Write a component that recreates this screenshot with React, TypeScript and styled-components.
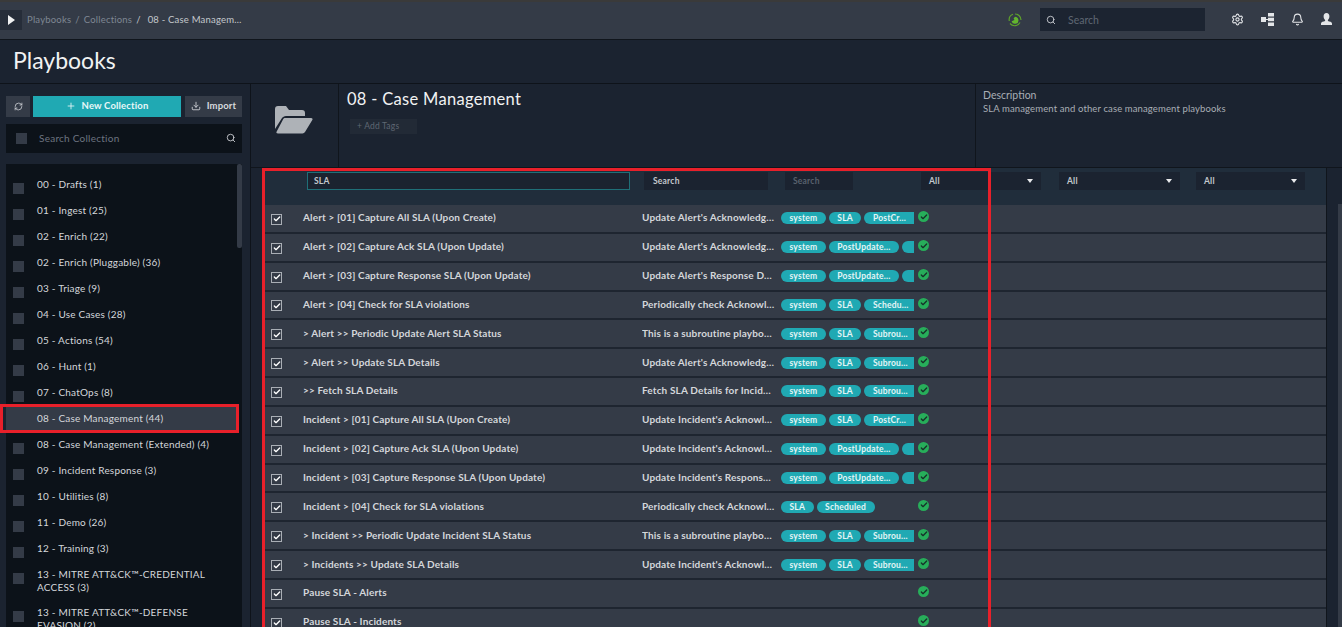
import React from "react";
import styled, { createGlobalStyle } from "styled-components";
import { Bell, Check, Download, Plus, RefreshCw, Search, Settings } from "lucide-react";

const GlobalStyle = createGlobalStyle`
  html, body { margin: 0; padding: 0; background: #1b2330; overflow: hidden; }
  * { box-sizing: border-box; }
  body { font-family: Lato, "Open Sans", sans-serif; }
`;

const Page = styled.div`
  width: 1342px;
  height: 627px;
  overflow: hidden;
  display: flex;
  flex-direction: column;
  color: #d7dade;
`;

const TopBar = styled.header`
  height: 40px;
  flex: none;
  display: flex;
  align-items: center;
  padding-bottom: 2px;
  background: #343b47;
  border-top: 2px solid #3a3a3a;
  border-bottom: 1px solid #10151c;
`;

const NavToggle = styled.div`
  width: 22px;
  height: 20px;
  background: #262d39;
  display: flex;
  align-items: center;
  justify-content: center;
  margin-right: 5px;
`;

const Crumbs = styled.div`
  flex: 1;
  display: flex;
  gap: 4px;
  font-size: 9.5px;
  letter-spacing: 0.2px;
  color: #7f8793;
`;

const CrumbSlash = styled.span`
  color: #c4c8cd;
  margin-right: 3px;
`;

const CrumbCurrent = styled.span`
  color: #c4c8cd;
`;

const TopSearch = styled.div`
  width: 165px;
  height: 23px;
  margin: 0 26px 0 18px;
  padding-left: 6px;
  display: flex;
  align-items: center;
  gap: 12px;
  background: #1c2431;
  font-size: 10.5px;
  color: #5f6773;
`;

const TopIcons = styled.div`
  display: flex;
  align-items: center;
  gap: 17px;
  padding-right: 10px;
`;

const TitleBand = styled.div`
  height: 44px;
  flex: none;
  padding: 0 0 3px 13px;
  display: flex;
  align-items: center;
  background: #1b2330;
  border-bottom: 1px solid #0e131a;
  font-size: 23px;
  line-height: 40px;
  color: #f1f2f3;
`;

const Body = styled.div`
  flex: 1;
  min-height: 0;
  display: flex;
`;

const Sidebar = styled.aside`
  width: 251px;
  flex: none;
  padding: 12px 8px 0 6px;
  background: #1b2330;
  border-right: 1px solid #0e131a;
  display: flex;
  flex-direction: column;
`;

const SideButtons = styled.div`
  display: flex;
  gap: 4px;
  margin-bottom: 7px;
`;

const IconButton = styled.button`
  width: 24px;
  height: 21px;
  padding: 0;
  border: none;
  background: #343b47;
  color: #d7dade;
  display: flex;
  align-items: center;
  justify-content: center;
  margin-right: -1px;
`;

const NewButton = styled.button`
  width: 148px;
  height: 21px;
  padding: 0 0 2px;
  border: none;
  background: #20a9b3;
  color: #e9f7f8;
  font: 700 9.5px Lato, sans-serif;
  letter-spacing: 0.15px;
  display: flex;
  align-items: center;
  justify-content: center;
  gap: 6px;
`;

const ImportButton = styled(NewButton)`
  width: 57px;
  background: #343b47;
  color: #d7dade;
`;

const Box = styled.div`
  width: 11px;
  height: 11px;
  flex: none;
  background: #343b47;
`;

const SideSearch = styled.div`
  height: 29px;
  padding: 0 6px 2px 10px;
  display: flex;
  align-items: center;
  background: #0c1219;
  font-size: 10px;
  letter-spacing: 0.25px;
  color: #6d7480;
  margin-bottom: 11px;
  span { flex: 1; margin-left: 12px; }
  ${Box} { margin-top: 2px; }
`;

const ListWrap = styled.div`
  flex: 1;
  min-height: 0;
  position: relative;
  background: #0c1219;
  padding-top: 8px;
`;

const ListItem = styled.div<{ $active?: boolean; $tall?: boolean }>`
  min-height: 26px;
  padding: 5.5px 12px 0 7px;
  display: flex;
  gap: 13px;
  font-size: 10px;
  line-height: 13px;
  letter-spacing: 0.2px;
  color: #d4d7db;
  background: ${({ $active }) => ($active ? "#343b47" : "transparent")};
  margin-right: 6px;
  ${({ $tall }) => ($tall ? "margin-bottom: 7px;" : "")}
  ${Box} { margin-top: 5px; }
`;

const SideThumb = styled.div`
  position: absolute;
  top: 0;
  right: 0;
  width: 5px;
  height: 84px;
  background: #343b47;
  border-radius: 2px;
`;

const RedBox = styled.div`
  position: absolute;
  left: -6px;
  top: 240px;
  width: 239px;
  height: 29px;
  border: 3px solid #e8202a;
  pointer-events: none;
`;

const Main = styled.main`
  flex: 1;
  min-width: 0;
  position: relative;
  display: flex;
  flex-direction: column;
`;

const Head = styled.div`
  height: 84px;
  flex: none;
  display: flex;
  border-bottom: 1px solid #10151c;
`;

const FolderCell = styled.div`
  width: 88px;
  flex: none;
  padding-top: 21px;
  padding-left: 24px;
  border-right: 1px solid #10151c;
`;

const NameCell = styled.div`
  flex: 1;
  padding: 5px 0 0 8px;
`;

const CollectionName = styled.div`
  font-size: 16.5px;
  line-height: 20px;
  letter-spacing: 0.3px;
  color: #f1f2f3;
`;

const AddTags = styled.div`
  width: 67px;
  height: 15px;
  margin: 10px 0 0 3px;
  padding-left: 7px;
  background: #222a36;
  font-size: 8.5px;
  line-height: 15px;
  letter-spacing: 0.2px;
  color: #5f6773;
`;

const DescCell = styled.div`
  width: 367px;
  flex: none;
  padding: 5px 0 0 7px;
  border-left: 1px solid #10151c;
  font-size: 10.5px;
  line-height: 13px;
  color: #a9aeb5;
`;

const DescText = styled.div`
  font-size: 9.5px;
  letter-spacing: 0.12px;
`;

const GridArea = styled.div`
  flex: 1;
  min-height: 0;
  margin-left: 14px;
  width: 1062px;
  border-right: 1px solid #10151c;
`;

const FilterRow = styled.div`
  height: 37px;
  padding: 4px 0 0 42px;
  display: flex;
  align-items: flex-start;
  background: #202d3b;
`;

const FilterInput = styled.div<{ $width: number; $left: number; $pad?: number; $accent?: boolean; $dim?: boolean }>`
  width: ${({ $width }) => $width}px;
  height: 18px;
  margin-left: ${({ $left }) => $left}px;
  padding: 0 8px 0 ${({ $pad }) => $pad ?? 8}px;
  display: flex;
  align-items: center;
  justify-content: space-between;
  background: #1b2330;
  border: ${({ $accent }) => ($accent ? "1px solid #1f6f78" : "none")};
  font-size: 8.5px;
  font-weight: 700;
  letter-spacing: 0.2px;
  color: ${({ $dim }) => ($dim ? "#59616d" : "#c4c8cd")};
`;

const Caret = styled.i`
  width: 0;
  height: 0;
  border-left: 3.5px solid transparent;
  border-right: 3.5px solid transparent;
  border-top: 4px solid #e8e9eb;
`;

const Row = styled.div`
  height: 28.85px;
  display: flex;
  align-items: center;
  padding-bottom: 2px;
  background: #343b47;
  border-bottom: 2px solid #1e2530;
`;

const Tick = styled.div`
  width: 11px;
  height: 11px;
  flex: none;
  margin: 4px 21px 0 6px;
  border: 1px solid #a9aeb5;
  display: flex;
  align-items: center;
  justify-content: center;
`;

const RowName = styled.div`
  width: 339px;
  flex: none;
  font-size: 10px;
  font-weight: 700;
  letter-spacing: 0.15px;
  color: #d4d7db;
`;

const RowDesc = styled.div`
  width: 139px;
  flex: none;
  font-size: 10px;
  font-weight: 700;
  letter-spacing: 0.15px;
  color: #d4d7db;
  white-space: nowrap;
  overflow: hidden;
`;

const Tags = styled.div`
  width: 133px;
  flex: none;
  margin-top: 2px;
  display: flex;
  gap: 3px;
  overflow: hidden;
`;

const Tag = styled.span<{ $cut?: boolean }>`
  flex: none;
  height: 12px;
  padding: 0 8.5px;
  border-radius: ${({ $cut }) => ($cut ? "6px 0 0 6px" : "6px")};
  background: #20a9b3;
  color: #e4f5f6;
  font-size: 8.5px;
  font-weight: 700;
  line-height: 12px;
  letter-spacing: 0.2px;
`;

const TagStub = styled(Tag)`
  flex: 1;
  min-width: 0;
`;

const StatusDot = styled.div`
  width: 11px;
  height: 11px;
  flex: none;
  margin: -1px 0 0 4px;
  border-radius: 50%;
  background: #27ae5a;
  display: flex;
  align-items: center;
  justify-content: center;
`;

const Scrollbar = styled.div`
  position: absolute;
  right: 0;
  top: 120px;
  width: 4px;
  bottom: 0;
  background: #343b47;
`;

const RedPanel = styled.div`
  position: absolute;
  left: 11px;
  top: 84px;
  width: 729px;
  height: 470px;
  border: 3px solid #e8202a;
  pointer-events: none;
`;

const collections = [
  "00 - Drafts (1)",
  "01 - Ingest (25)",
  "02 - Enrich (22)",
  "02 - Enrich (Pluggable) (36)",
  "03 - Triage (9)",
  "04 - Use Cases (28)",
  "05 - Actions (54)",
  "06 - Hunt (1)",
  "07 - ChatOps (8)",
  "08 - Case Management (44)",
  "08 - Case Management (Extended) (4)",
  "09 - Incident Response (3)",
  "10 - Utilities (8)",
  "11 - Demo (26)",
  "12 - Training (3)",
  "13 - MITRE ATT&CK™-CREDENTIAL ACCESS (3)",
  "13 - MITRE ATT&CK™-DEFENSE EVASION (2)",
];

type Pb = { name: string; desc?: string; tags: string[]; stub?: boolean };

const playbooks: Pb[] = [
  { name: "Alert > [01] Capture All SLA (Upon Create)", desc: "Update Alert's Acknowledg…", tags: ["system", "SLA", "PostCr…"] },
  { name: "Alert > [02] Capture Ack SLA (Upon Update)", desc: "Update Alert's Acknowledg…", tags: ["system", "PostUpdate…"], stub: true },
  { name: "Alert > [03] Capture Response SLA (Upon Update)", desc: "Update Alert's Response D…", tags: ["system", "PostUpdate…"], stub: true },
  { name: "Alert > [04] Check for SLA violations", desc: "Periodically check Acknowl…", tags: ["system", "SLA", "Schedu…"] },
  { name: "> Alert >> Periodic Update Alert SLA Status", desc: "This is a subroutine playbo…", tags: ["system", "SLA", "Subrou…"] },
  { name: "> Alert >> Update SLA Details", desc: "Update Alert's Acknowledg…", tags: ["system", "SLA", "Subrou…"] },
  { name: ">> Fetch SLA Details", desc: "Fetch SLA Details for Incid…", tags: ["system", "SLA", "Subrou…"] },
  { name: "Incident > [01] Capture All SLA (Upon Create)", desc: "Update Incident's Acknowl…", tags: ["system", "SLA", "PostCr…"] },
  { name: "Incident > [02] Capture Ack SLA (Upon Update)", desc: "Update Incident's Acknowl…", tags: ["system", "PostUpdate…"], stub: true },
  { name: "Incident > [03] Capture Response SLA (Upon Update)", desc: "Update Incident's Respons…", tags: ["system", "PostUpdate…"], stub: true },
  { name: "Incident > [04] Check for SLA violations", desc: "Periodically check Acknowl…", tags: ["SLA", "Scheduled"] },
  { name: "> Incident >> Periodic Update Incident SLA Status", desc: "This is a subroutine playbo…", tags: ["system", "SLA", "Subrou…"] },
  { name: "> Incidents >> Update SLA Details", desc: "Update Incident's Acknowl…", tags: ["system", "SLA", "Subrou…"] },
  { name: "Pause SLA - Alerts", tags: [] },
  { name: "Pause SLA - Incidents", tags: [] },
];

const Folder = () => (
  <svg width="38" height="29" viewBox="0 0 38 29" fill="#aeb2b7">
    <path d="M0 4a3 3 0 0 1 3-3h8l3 4h13a3 3 0 0 1 3 3v3H11c-2 0-3 1-4 2L0 24z" />
    <path d="M10 13h26c1.500 0 2 1 1.300 2L30 27a3 3 0 0 1-2.500 1.500H3c-1.500 0-2-1-1.300-2L8 14.500c.5-1 1-1.500 2-1.500z" />
  </svg>
);

const Hierarchy = () => (
  <svg width="13" height="13" viewBox="0 0 13 13" fill="#e3e5e8">
    <rect x="0" y="4" width="5" height="5" />
    <rect x="5" y="6" width="2" height="1" />
    <rect x="7" y="0" width="6" height="3.500" />
    <rect x="7" y="4.700" width="6" height="3.500" />
    <rect x="7" y="9.500" width="6" height="3.500" />
  </svg>
);

const Bust = () => (
  <svg width="11" height="13" viewBox="0 0 11 13" fill="#e3e5e8">
    <path d="M5.500 0C7.400 0 8.400 1.400 8.400 3.200c0 1.600-.7 2.900-1.500 3.700v1.200c1.700.5 4.100 1 4.100 2.400V12H0v-1.500c0-1.400 2.400-1.900 4.100-2.400V6.900C3.300 6.100 2.600 4.800 2.600 3.200 2.600 1.400 3.600 0 5.500 0z" />
  </svg>
);

const StatusLogo = () => (
  <svg width="14" height="14" viewBox="0 0 14 14" fill="none">
    <path d="M7 1a6 6 0 0 1 6 6M12 9.500A6 6 0 0 1 2 10.500M1.300 8A6 6 0 0 1 5 1.300" stroke="#5da12b" strokeWidth="1.200" />
    <path d="M7 3.800a3.500 3.500 0 1 1-3.400 4.400L6.500 7 5.600 5.500z" fill="#63b52e" />
  </svg>
);

export default function App() {
  return (
    <Page>
      <GlobalStyle />
      <TopBar>
        <NavToggle>
          <svg width="7" height="10" viewBox="0 0 7 10" fill="#f0f1f2">
            <path d="M0 0l7 5-7 5z" />
          </svg>
        </NavToggle>
        <Crumbs>
          <span>Playbooks</span>
          <span>/</span>
          <span>Collections</span>
          <CrumbSlash>/</CrumbSlash>
          <CrumbCurrent>08 - Case Managem…</CrumbCurrent>
        </Crumbs>
        <StatusLogo />
        <TopSearch>
          <Search size={10} color="#d7dade" />
          <span>Search</span>
        </TopSearch>
        <TopIcons>
          <Settings size={13} color="#e3e5e8" />
          <Hierarchy />
          <Bell size={13} color="#e3e5e8" />
          <Bust />
        </TopIcons>
      </TopBar>
      <TitleBand>Playbooks</TitleBand>
      <Body>
        <Sidebar>
          <SideButtons>
            <IconButton>
              <RefreshCw size={9} />
            </IconButton>
            <NewButton>
              <Plus size={10} />
              New Collection
            </NewButton>
            <ImportButton>
              <Download size={10} />
              Import
            </ImportButton>
          </SideButtons>
          <SideSearch>
            <Box />
            <span>Search Collection</span>
            <Search size={10} color="#d7dade" />
          </SideSearch>
          <ListWrap>
            <SideThumb />
            {collections.map((c, i) => (
              <ListItem key={c} $active={i === 9} $tall={i === 15}>
                <Box />
                <span>{c}</span>
              </ListItem>
            ))}
            <RedBox />
          </ListWrap>
        </Sidebar>
        <Main>
          <Head>
            <FolderCell>
              <Folder />
            </FolderCell>
            <NameCell>
              <CollectionName>08 - Case Management</CollectionName>
              <AddTags>+ Add Tags</AddTags>
            </NameCell>
            <DescCell>
              Description
              <DescText>SLA management and other case management playbooks</DescText>
            </DescCell>
          </Head>
          <GridArea>
            <FilterRow>
              <FilterInput $width={323} $left={0} $pad={6} $accent>SLA</FilterInput>
              <FilterInput $width={124} $left={14} $pad={9}>Search</FilterInput>
              <FilterInput $width={68} $left={17} $dim>Search</FilterInput>
              <FilterInput $width={120} $left={68}>All<Caret /></FilterInput>
              <FilterInput $width={121} $left={18}>All<Caret /></FilterInput>
              <FilterInput $width={109} $left={16}>All<Caret /></FilterInput>
            </FilterRow>
            {playbooks.map((p) => (
              <Row key={p.name}>
                <Tick>
                  <Check size={8} color="#fff" strokeWidth={4} />
                </Tick>
                <RowName>{p.name}</RowName>
                <RowDesc>{p.desc}</RowDesc>
                <Tags>
                  {p.tags.map((t, i) => (
                    <Tag key={t} $cut={!p.stub && p.tags.length === 3 && i === 2}>{t}</Tag>
                  ))}
                  {p.stub && <TagStub $cut />}
                </Tags>
                <StatusDot>
                  <Check size={8} color="#17332a" strokeWidth={4} />
                </StatusDot>
              </Row>
            ))}
          </GridArea>
          <Scrollbar />
          <RedPanel />
        </Main>
      </Body>
    </Page>
  );
}
